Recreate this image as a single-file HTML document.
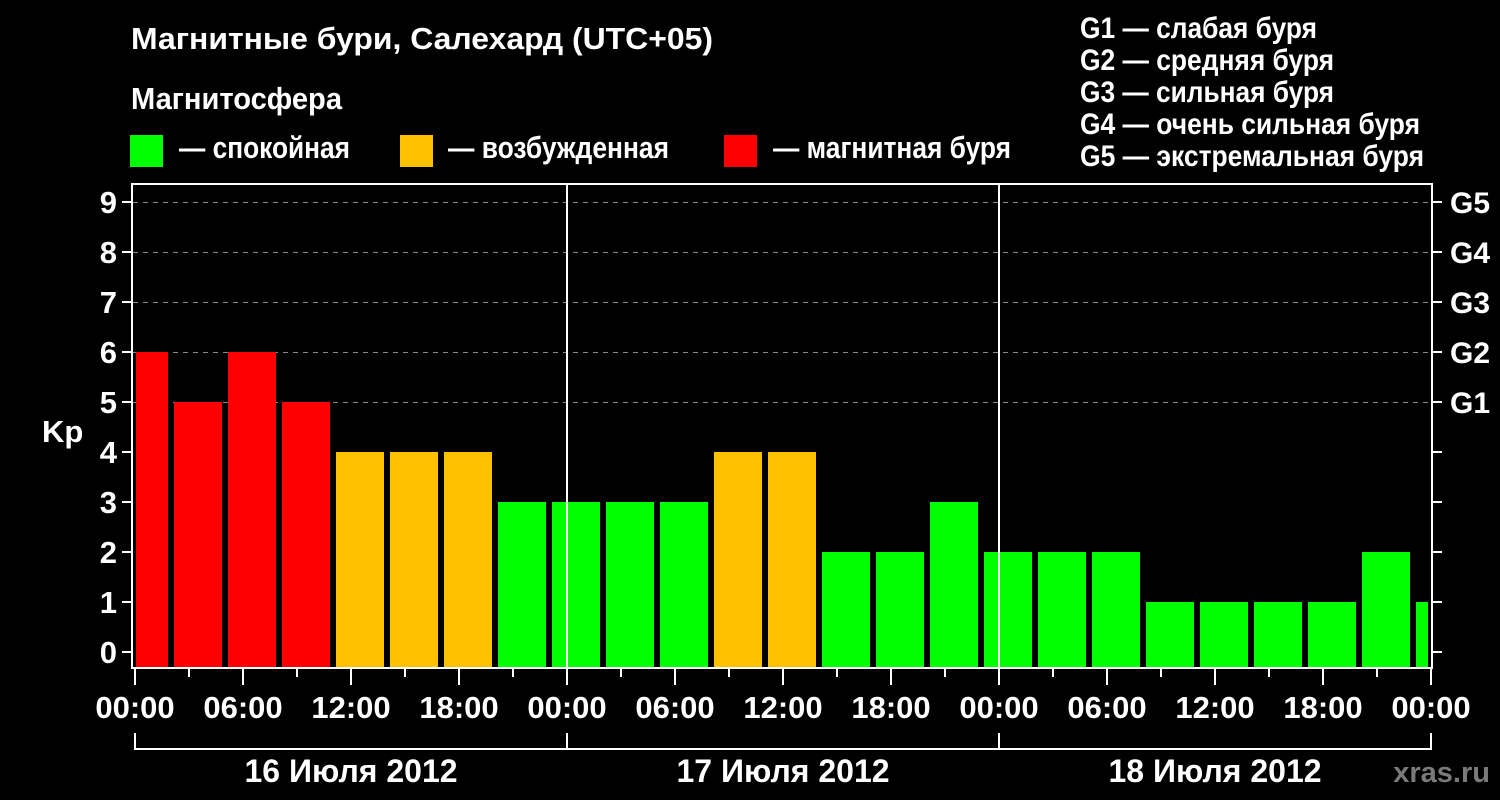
<!DOCTYPE html>
<html><head><meta charset="utf-8"><style>
html,body{margin:0;padding:0;background:#000;width:1500px;height:800px;overflow:hidden}
svg{display:block}
text{font-family:"Liberation Sans",Arial,sans-serif;font-weight:bold;fill:#fff}
</style></head><body>
<svg width="1500" height="800" viewBox="0 0 1500 800" xmlns="http://www.w3.org/2000/svg">
<rect width="1500" height="800" fill="#000"/>
<text x="131" y="49" font-size="31" textLength="582" lengthAdjust="spacingAndGlyphs">Магнитные бури, Салехард (UTC+05)</text>
<text x="131" y="109" font-size="31" textLength="211" lengthAdjust="spacingAndGlyphs">Магнитосфера</text>
<rect x="130" y="135" width="33" height="32" fill="#00ff00"/>
<text x="179" y="158" font-size="31" textLength="171" lengthAdjust="spacingAndGlyphs">— спокойная</text>
<rect x="400" y="135" width="33" height="32" fill="#ffc000"/>
<text x="448" y="158" font-size="31" textLength="221" lengthAdjust="spacingAndGlyphs">— возбужденная</text>
<rect x="724" y="135" width="33" height="32" fill="#ff0000"/>
<text x="773" y="158" font-size="31" textLength="238" lengthAdjust="spacingAndGlyphs">— магнитная буря</text>
<g font-size="30">
<text x="1080" y="38" textLength="237" lengthAdjust="spacingAndGlyphs">G1 — слабая буря</text>
<text x="1080" y="70" textLength="254" lengthAdjust="spacingAndGlyphs">G2 — средняя буря</text>
<text x="1080" y="102" textLength="254" lengthAdjust="spacingAndGlyphs">G3 — сильная буря</text>
<text x="1080" y="134" textLength="340" lengthAdjust="spacingAndGlyphs">G4 — очень сильная буря</text>
<text x="1080" y="166" textLength="344" lengthAdjust="spacingAndGlyphs">G5 — экстремальная буря</text>
</g>
<g stroke="#888" stroke-width="1" stroke-dasharray="5,5">
<line x1="133" y1="202.5" x2="1432" y2="202.5"/>
<line x1="133" y1="252.5" x2="1432" y2="252.5"/>
<line x1="133" y1="302.5" x2="1432" y2="302.5"/>
<line x1="133" y1="352.5" x2="1432" y2="352.5"/>
<line x1="133" y1="402.5" x2="1432" y2="402.5"/>
</g>
<g>
<rect x="136" y="352" width="32" height="316" fill="#f00"/>
<rect x="174" y="402" width="48" height="266" fill="#f00"/>
<rect x="228" y="352" width="48" height="316" fill="#f00"/>
<rect x="282" y="402" width="48" height="266" fill="#f00"/>
<rect x="336" y="452" width="48" height="216" fill="#ffc000"/>
<rect x="390" y="452" width="48" height="216" fill="#ffc000"/>
<rect x="444" y="452" width="48" height="216" fill="#ffc000"/>
<rect x="498" y="502" width="48" height="166" fill="#0f0"/>
<rect x="552" y="502" width="48" height="166" fill="#0f0"/>
<rect x="606" y="502" width="48" height="166" fill="#0f0"/>
<rect x="660" y="502" width="48" height="166" fill="#0f0"/>
<rect x="714" y="452" width="48" height="216" fill="#ffc000"/>
<rect x="768" y="452" width="48" height="216" fill="#ffc000"/>
<rect x="822" y="552" width="48" height="116" fill="#0f0"/>
<rect x="876" y="552" width="48" height="116" fill="#0f0"/>
<rect x="930" y="502" width="48" height="166" fill="#0f0"/>
<rect x="984" y="552" width="48" height="116" fill="#0f0"/>
<rect x="1038" y="552" width="48" height="116" fill="#0f0"/>
<rect x="1092" y="552" width="48" height="116" fill="#0f0"/>
<rect x="1146" y="602" width="48" height="66" fill="#0f0"/>
<rect x="1200" y="602" width="48" height="66" fill="#0f0"/>
<rect x="1254" y="602" width="48" height="66" fill="#0f0"/>
<rect x="1308" y="602" width="48" height="66" fill="#0f0"/>
<rect x="1362" y="552" width="48" height="116" fill="#0f0"/>
<rect x="1416" y="602" width="12" height="66" fill="#0f0"/>
</g>
<rect x="132" y="184" width="1300" height="484" fill="none" stroke="#fff" stroke-width="2"/>
<g stroke="#fff" stroke-width="2">
<line x1="567" y1="183" x2="567" y2="669"/>
<line x1="999" y1="183" x2="999" y2="669"/>
<line x1="122" y1="202" x2="131" y2="202"/><line x1="122" y1="252" x2="131" y2="252"/>
<line x1="122" y1="302" x2="131" y2="302"/><line x1="122" y1="352" x2="131" y2="352"/>
<line x1="122" y1="402" x2="131" y2="402"/><line x1="122" y1="452" x2="131" y2="452"/>
<line x1="122" y1="502" x2="131" y2="502"/><line x1="122" y1="552" x2="131" y2="552"/>
<line x1="122" y1="602" x2="131" y2="602"/><line x1="122" y1="652" x2="131" y2="652"/>
<line x1="1433" y1="202" x2="1442" y2="202"/><line x1="1433" y1="252" x2="1442" y2="252"/>
<line x1="1433" y1="302" x2="1442" y2="302"/><line x1="1433" y1="352" x2="1442" y2="352"/>
<line x1="1433" y1="402" x2="1442" y2="402"/><line x1="1433" y1="452" x2="1442" y2="452"/>
<line x1="1433" y1="502" x2="1442" y2="502"/><line x1="1433" y1="552" x2="1442" y2="552"/>
<line x1="1433" y1="602" x2="1442" y2="602"/><line x1="1433" y1="652" x2="1442" y2="652"/>
<line x1="135" y1="669" x2="135" y2="685"/><line x1="189" y1="669" x2="189" y2="677"/>
<line x1="243" y1="669" x2="243" y2="685"/><line x1="297" y1="669" x2="297" y2="677"/>
<line x1="351" y1="669" x2="351" y2="685"/><line x1="405" y1="669" x2="405" y2="677"/>
<line x1="459" y1="669" x2="459" y2="685"/><line x1="513" y1="669" x2="513" y2="677"/>
<line x1="567" y1="669" x2="567" y2="685"/><line x1="621" y1="669" x2="621" y2="677"/>
<line x1="675" y1="669" x2="675" y2="685"/><line x1="729" y1="669" x2="729" y2="677"/>
<line x1="783" y1="669" x2="783" y2="685"/><line x1="837" y1="669" x2="837" y2="677"/>
<line x1="891" y1="669" x2="891" y2="685"/><line x1="945" y1="669" x2="945" y2="677"/>
<line x1="999" y1="669" x2="999" y2="685"/><line x1="1053" y1="669" x2="1053" y2="677"/>
<line x1="1107" y1="669" x2="1107" y2="685"/><line x1="1161" y1="669" x2="1161" y2="677"/>
<line x1="1215" y1="669" x2="1215" y2="685"/><line x1="1269" y1="669" x2="1269" y2="677"/>
<line x1="1323" y1="669" x2="1323" y2="685"/><line x1="1377" y1="669" x2="1377" y2="677"/>
<line x1="1431" y1="669" x2="1431" y2="685"/>
<line x1="134" y1="749" x2="1432" y2="749"/>
<line x1="135" y1="733" x2="135" y2="750"/><line x1="567" y1="733" x2="567" y2="750"/>
<line x1="999" y1="733" x2="999" y2="750"/><line x1="1431" y1="733" x2="1431" y2="750"/>
</g>
<g font-size="31" text-anchor="end">
<text x="117" y="213">9</text><text x="117" y="263">8</text><text x="117" y="313">7</text>
<text x="117" y="363">6</text><text x="117" y="413">5</text><text x="117" y="463">4</text>
<text x="117" y="513">3</text><text x="117" y="563">2</text><text x="117" y="613">1</text>
<text x="117" y="663">0</text>
</g>
<text x="42" y="442" font-size="31">Kp</text>
<g font-size="30">
<text x="1450" y="213">G5</text><text x="1450" y="263">G4</text><text x="1450" y="313">G3</text>
<text x="1450" y="363">G2</text><text x="1450" y="413">G1</text>
</g>
<g font-size="31" text-anchor="middle">
<text x="135" y="718">00:00</text><text x="243" y="718">06:00</text><text x="351" y="718">12:00</text>
<text x="459" y="718">18:00</text><text x="567" y="718">00:00</text><text x="675" y="718">06:00</text>
<text x="783" y="718">12:00</text><text x="891" y="718">18:00</text><text x="999" y="718">00:00</text>
<text x="1107" y="718">06:00</text><text x="1215" y="718">12:00</text><text x="1323" y="718">18:00</text>
<text x="1431" y="718">00:00</text>
</g>
<g font-size="32" text-anchor="middle">
<text x="351" y="782">16 Июля 2012</text>
<text x="783" y="782">17 Июля 2012</text>
<text x="1215" y="782">18 Июля 2012</text>
</g>
<text x="1490" y="782" font-size="29" text-anchor="end" style="fill:#7a7a7a">xras.ru</text>
</svg>
</body></html>
